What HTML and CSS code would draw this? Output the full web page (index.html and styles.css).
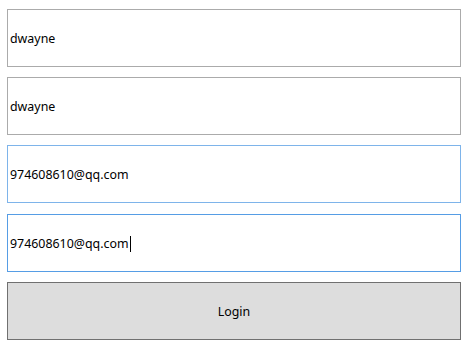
FILE: index.html
```html
<!DOCTYPE html>
<html lang="en">
<head>
    <meta charset="UTF-8">
    <meta name="viewport" content="width=device-width, initial-scale=1.0">
    <title>Login</title>
    <link rel="stylesheet" href="styles.css">
</head>
<body>
    <form class="form" id="loginForm">
        <div class="textbox">dwayne</div>
        <div class="textbox">dwayne</div>
        <div class="textbox hover">974608610@qq.com</div>
        <div class="textbox focus">974608610@qq.com<span class="caret"></span></div>
        <button type="button" class="login">Login</button>
    </form>
</body>
</html>
```

FILE: styles.css
```css
body {
    margin: 0;
    padding: 9px 0 0 7px;
    font-family: "Noto Sans", "Open Sans", sans-serif;
    font-size: 12.4px;
    color: #000;
    background: #fff;
}

.form {
    width: 454px;
    display: flex;
    flex-direction: column;
}

/* Cajas de texto */
.textbox {
    box-sizing: border-box;
    height: 58px;
    margin-bottom: 10px;
    border: 1px solid #ababab;
    padding: 1px 2px 0;
    display: flex;
    align-items: center;
    white-space: nowrap;
}

.textbox.hover {
    border-color: #7eb4ea;
}

.textbox.focus {
    border-color: #569de5;
    margin-top: 1px;
}

.caret {
    display: inline-block;
    width: 1px;
    height: 16px;
    background: #000;
    margin-left: 1px;
}

/* Botón */
.login {
    box-sizing: border-box;
    height: 58px;
    border: 1px solid #707070;
    background: #dddddd;
    font-family: inherit;
    font-size: 12.4px;
    color: #000;
    padding: 0;
}
```
